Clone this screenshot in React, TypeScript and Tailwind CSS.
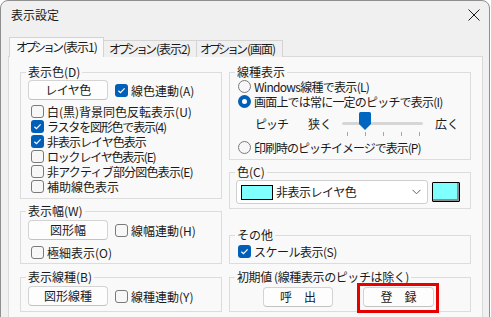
import React from "react";

type BoxProps = { title: string; className?: string; children?: React.ReactNode };

function Box({ title, className, children }: BoxProps) {
  return (
    <fieldset className={`border border-[#dcdcdc] ${className ?? ""}`}>
      <legend className="ml-[5px] whitespace-nowrap px-[2px] leading-[16px]">{title}</legend>
      {children}
    </fieldset>
  );
}

type ItemProps = { checked?: boolean; label: string; className?: string; textClass?: string };

function CheckBox({ checked, label, className, textClass }: ItemProps) {
  return (
    <div className={`flex h-[15px] items-center ${className ?? ""}`}>
      {checked ? (
        <span className="flex h-[13px] w-[13px] shrink-0 items-center justify-center rounded-[3px] bg-[#005fb8]">
          <svg width="13" height="13" viewBox="0 0 13 13">
            <path d="M3.4 6.7 L5.5 8.7 L9.6 4.4" fill="none" stroke="#fff" strokeWidth="1.2" />
          </svg>
        </span>
      ) : (
        <span className="h-[13px] w-[13px] shrink-0 rounded-[3px] border border-[#7a7a7a] bg-[#f7f7f7]" />
      )}
      <span className={`ml-[3px] whitespace-nowrap leading-[15px] ${textClass ?? ""}`}>{label}</span>
    </div>
  );
}

function Radio({ checked, label, className, textClass }: ItemProps) {
  return (
    <div className={`flex h-[15px] items-center ${className ?? ""}`}>
      {checked ? (
        <span className="flex h-[13px] w-[13px] shrink-0 items-center justify-center rounded-full bg-[#005fb8]">
          <span className="h-[5px] w-[5px] rounded-full bg-white" />
        </span>
      ) : (
        <span className="h-[13px] w-[13px] shrink-0 rounded-full border border-[#7a7a7a] bg-[#f7f7f7]" />
      )}
      <span className={`ml-[3px] whitespace-nowrap leading-[15px] ${textClass ?? ""}`}>{label}</span>
    </div>
  );
}

function Btn({ label, className }: { label: string; className?: string }) {
  return (
    <div
      className={`flex h-[20px] items-center justify-center whitespace-nowrap rounded-[4px] border border-[#d3d3d3] border-b-[#c2c2c2] bg-[#fdfdfd] ${className ?? ""}`}
    >
      {label}
    </div>
  );
}

function TabLabel({ rest }: { rest: string }) {
  return (
    <>
      <span className="tracking-[-3px]">オプション</span>
      <span className="ml-[2px] tracking-[-1px]">{rest}</span>
    </>
  );
}

const ticks = [9, 27, 45, 63, 81];

export default function App() {
  return (
    <div className="h-[317px] w-[491px] overflow-hidden bg-white font-['Noto_Sans_CJK_JP','Noto_Sans',sans-serif] text-[12px] leading-[16px] text-[#1a1a1a]">
      <div className="h-[340px] w-[490px] rounded-t-[8px] border border-[#8f8f8f] bg-[#f0f0f0]">
        {/* title bar */}
        <div className="flex h-[28px] items-center justify-between pl-[10px] pr-[8px]">
          <span>表示設定</span>
          <svg width="12" height="12" viewBox="0 0 12 12" className="mr-px">
            <path d="M0.5 0.5 L11.5 11.5 M11.5 0.5 L0.5 11.5" stroke="#1a1a1a" strokeWidth="1" />
          </svg>
        </div>

        {/* tabs */}
        <div className="mt-[8px] flex h-[20px] items-end whitespace-nowrap pl-[8px]">
          <div className="relative z-10 h-[20px] w-[95px] overflow-hidden border border-b-0 border-[#d4d4d4] bg-[#f9f9f9] pl-[6px] pt-px">
            <TabLabel rest="(表示1)" />
          </div>
          <div className="h-[17px] w-[93px] overflow-hidden border border-b-0 border-l-0 border-[#d4d4d4] bg-[#f0f0f0] pl-[5px]">
            <TabLabel rest="(表示2)" />
          </div>
          <div className="h-[17px] w-[86px] overflow-hidden border border-b-0 border-l-0 border-[#d4d4d4] bg-[#f0f0f0] pl-[3px]">
            <TabLabel rest="(画面)" />
          </div>
        </div>

        {/* panel */}
        <div className="-mt-px ml-[7px] flex h-[280px] w-[475px] gap-[7px] border border-[#d9d9d9] bg-[#f9f9f9] pl-[11px] pt-[7px]">
          {/* left column */}
          <div className="flex w-[202px] flex-col">
            <Box title="表示色(D)" className="h-[135px]">
              <div className="flex items-center pl-[7px]">
                <Btn label="レイヤ色" className="w-[80px] tracking-[-0.5px]" />
                <CheckBox checked label="線色連動(A)" className="ml-[7px]" />
              </div>
              <div className="mt-[4px] flex flex-col pl-[10px]">
                <CheckBox label="白(黒)背景同色反転表示(U)" />
                <CheckBox checked label="ラスタを図形色で表示(4)" textClass="tracking-[-1.2px]" />
                <CheckBox checked label="非表示レイヤ色表示" textClass="tracking-[-1px]" />
                <CheckBox label="ロックレイヤ色表示(E)" textClass="tracking-[-1.2px]" />
                <CheckBox label="非アクティブ部分図色表示(E)" textClass="tracking-[-0.8px]" />
                <CheckBox label="補助線色表示" />
              </div>
            </Box>
            <Box title="表示幅(W)" className="mt-[4px] h-[61px]">
              <div className="mt-px flex items-center pl-[7px]">
                <Btn label="図形幅" className="w-[80px]" />
                <CheckBox label="線幅連動(H)" className="ml-[7px]" />
              </div>
              <CheckBox label="極細表示(O)" className="ml-[10px] mt-[5px]" />
            </Box>
            <Box title="表示線種(B)" className="mt-[5px] h-[43px]">
              <div className="mt-px flex items-center pl-[7px]">
                <Btn label="図形線種" className="w-[80px]" />
                <CheckBox label="線種連動(Y)" className="ml-[7px]" />
              </div>
            </Box>
          </div>

          {/* right column */}
          <div className="flex w-[242px] flex-col">
            <Box title="線種表示" className="h-[96px]">
              <div className="-mt-px flex flex-col pl-[8px]">
                <Radio label="Windows線種で表示(L)" textClass="tracking-[-0.7px]" />
                <Radio checked label="画面上では常に一定のピッチで表示(I)" textClass="tracking-[-0.8px]" />
              </div>
              <div className="flex h-[31px] items-start pl-[25px] pt-[3px]">
                <span className="mt-[4px] w-[53px] tracking-[-1px]">ピッチ</span>
                <span className="mt-[4px] w-[30px]">狭く</span>
                <div className="relative h-[28px] w-[89px]">
                  <div className="ml-[4px] mt-[10px] h-[3px] w-[81px] rounded-full bg-[#d6d6d6]" />
                  <svg width="12" height="18" viewBox="0 0 12 18" className="absolute left-[21px] top-0">
                    <path d="M1.5 0 H10.5 Q12 0 12 1.5 V12 L6 18 L0 12 V1.5 Q0 0 1.5 0 Z" fill="#0067c0" />
                  </svg>
                  {ticks.map((t) => (
                    <span key={t} className="absolute top-[20px] h-[4px] w-px bg-[#a5a5a5]" style={{ left: t }} />
                  ))}
                </div>
                <span className="ml-[8px] mt-[4px]">広く</span>
              </div>
              <Radio label="印刷時のピッチイメージで表示(P)" className="ml-[8px]" textClass="tracking-[-1px]" />
            </Box>

            <Box title="色(C)" className="mt-[4px] h-[45px]">
              <div className="flex items-center pl-[6px]">
                <div className="flex h-[24px] w-[192px] items-center rounded-[3px] border border-[#cfcfcf] bg-white pl-[4px]">
                  <span className="h-[15px] w-[32px] border border-black bg-[#80ffff]" />
                  <span className="ml-[3px] tracking-[-0.5px]">非表示レイヤ色</span>
                  <svg width="9" height="6" viewBox="0 0 9 6" className="ml-auto mr-[6px]">
                    <path d="M0.5 0.8 L4.5 4.8 L8.5 0.8" fill="none" stroke="#606060" strokeWidth="1" />
                  </svg>
                </div>
                <span className="ml-[4px] h-[20px] w-[28px] rounded-[1px] border border-black bg-[#80ffff] shadow-[inset_-2px_-2px_0_#8c8c8c]" />
              </div>
            </Box>

            <Box title="その他" className="mt-[18px] h-[37px]">
              <CheckBox checked label="スケール表示(S)" className="ml-[8px] mt-px" textClass="tracking-[-0.5px]" />
            </Box>

            <Box title="初期値 (線種表示のピッチは除く)" className="mt-[5px] h-[43px] [&>legend]:tracking-[-0.4px]">
              <div className="mt-[2px] flex items-center">
                <Btn label="呼　出" className="ml-[33px] h-[19px] w-[70px]" />
                <div className="relative ml-[30px]">
                  <Btn label="登　録" className="h-[19px] w-[71px]" />
                  <div className="absolute -bottom-[6px] -left-[6px] -right-[5px] -top-[4px] border-[3px] border-[#e60000]" />
                </div>
              </div>
            </Box>
          </div>
        </div>
      </div>
    </div>
  );
}
